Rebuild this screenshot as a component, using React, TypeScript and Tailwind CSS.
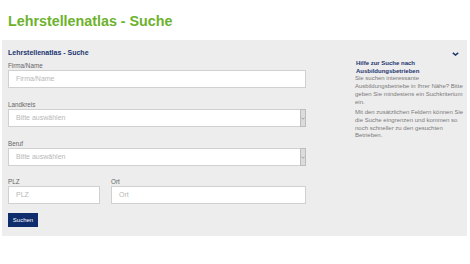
import React from "react";

function Field({ label, placeholder, select, width }: { label: string; placeholder: string; select?: boolean; width: string }) {
  return (
    <div className={`flex flex-col ${width}`}>
      <div className="h-[8px] text-[6.3px] leading-[8px] text-[#666]">{label}</div>
      <div className="relative flex h-[18px] items-center border border-[#d0d0d0] bg-white pl-[7px]">
        <span className="text-[7px] leading-[8px] text-[#b8b8b8]">{placeholder}</span>
        {select && (
          <div className="absolute right-[-1px] top-[-1px] bottom-[-1px] flex w-[6px] items-center justify-center border border-[#bdbdbd] bg-[#dcdcdc]">
            <svg width="4" height="3" viewBox="0 0 4 3">
              <path d="M0.5 0.8 L2 2.2 L3.5 0.8" fill="none" stroke="#888" strokeWidth="0.7" />
            </svg>
          </div>
        )}
      </div>
    </div>
  );
}

export default function App() {
  return (
    <div className="h-[264px] w-[470px] bg-white font-['Liberation_Sans',Arial,sans-serif]">
      <div className="flex h-[40px] items-start pl-[8px] pt-[12px]">
        <h1 className="text-[14.3px] font-bold leading-[18px] text-[#6cb22c]">Lehrstellenatlas - Suche</h1>
      </div>
      <div className="mx-[2px] flex h-[196px] w-[465px] bg-[#ededed] pl-[6px] pt-[8px]">
        <div className="flex w-[298px] shrink-0 flex-col">
          <div className="h-[10px] text-[7px] font-bold leading-[10px] text-[#1c3570]">Lehrstellenatlas - Suche</div>
          <div className="mt-[4px]">
            <Field label="Firma/Name" placeholder="Firma/Name" width="w-[298px]" />
          </div>
          <div className="mt-[13px]">
            <Field label="Landkreis" placeholder="Bitte auswählen" select width="w-[298px]" />
          </div>
          <div className="mt-[13px]">
            <Field label="Beruf" placeholder="Bitte auswählen" select width="w-[298px]" />
          </div>
          <div className="mt-[12px] flex gap-[11px]">
            <Field label="PLZ" placeholder="PLZ" width="w-[92px]" />
            <Field label="Ort" placeholder="Ort" width="w-[195px]" />
          </div>
          <div className="mt-[9px]">
            <button className="flex h-[14px] w-[30px] items-center justify-center bg-[#0f2c6c] text-[6px] leading-[8px] text-white">
              Suchen
            </button>
          </div>
        </div>
        <div className="ml-[49px] flex w-[112px] shrink-0 flex-col">
          <div className="flex h-[12px] items-start justify-end pt-[4px] pr-[8px]">
            <svg width="7" height="4" viewBox="0 0 7 4">
              <path d="M0.8 0.8 L3.5 3 L6.2 0.8" fill="none" stroke="#1c3570" strokeWidth="1.5" />
            </svg>
          </div>
          <div className="pl-[1px] text-[6px] font-bold leading-[7.7px] text-[#1c3570]">
            Hilfe zur Suche nach
            <br />
            Ausbildungsbetrieben
          </div>
          <div className="text-[6px] leading-[7.7px] text-[#7a7a7a]">
            Sie suchen interessante Ausbildungsbetriebe in Ihrer Nähe? Bitte geben Sie mindestens ein Suchkriterium ein.
          </div>
          <div className="mt-[3px] text-[6px] leading-[7.7px] text-[#7a7a7a]">
            Mit den zusätzlichen Feldern können Sie die Suche eingrenzen und kommen so noch schneller zu den gesuchten Betrieben.
          </div>
        </div>
      </div>
    </div>
  );
}
